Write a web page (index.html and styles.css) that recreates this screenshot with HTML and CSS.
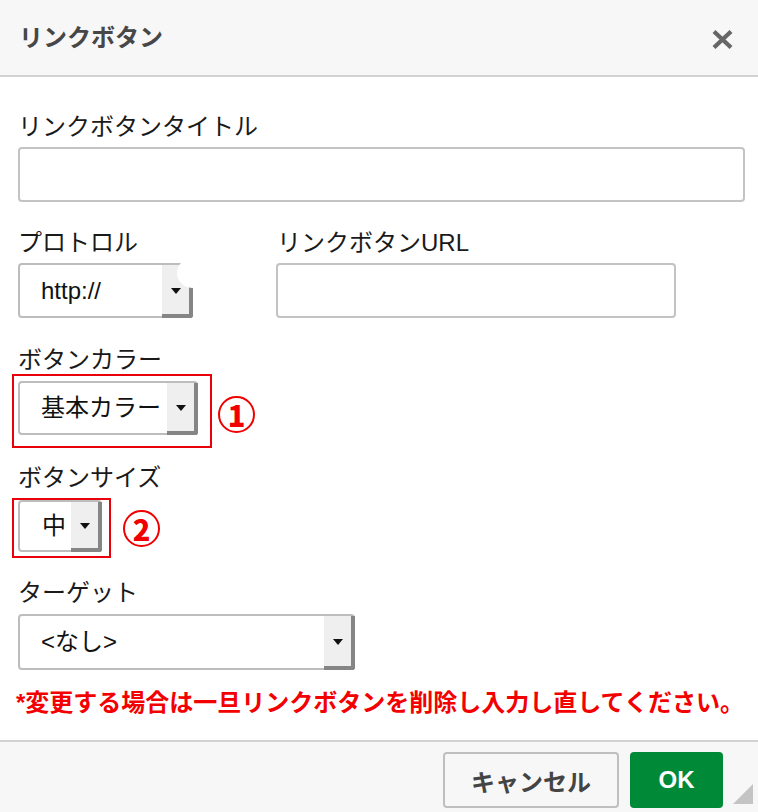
FILE: index.html
```html
<!DOCTYPE html>
<html lang="ja">
<head>
<meta charset="utf-8">
<title>リンクボタン</title>
<link rel="stylesheet" href="styles.css">
</head>
<body>
<div class="dialog">
  <div class="header">
    <div class="title">リンクボタン</div>
    <svg class="close" width="21" height="19" viewBox="0 0 21 19"><path d="M2 1.5 L19 17.5 M19 1.5 L2 17.5" stroke="#666" stroke-width="4.2" fill="none"/></svg>
  </div>
  <div class="body">
    <div class="label first">リンクボタンタイトル</div>
    <div class="input wide"></div>

    <div class="row">
      <div class="col proto">
        <div class="label">プロトロル</div>
        <div class="select w-proto">
          <span class="val">http://</span>
          <span class="arrow"><svg width="10" height="6" viewBox="0 0 10 6"><path d="M0 0 H10 L5 6 Z" fill="#111"/></svg></span>
          <span class="blob"></span>
        </div>
      </div>
      <div class="col url">
        <div class="label">リンクボタンURL</div>
        <div class="input w-url"></div>
      </div>
    </div>

    <div class="label l-color">ボタンカラー</div>
    <div class="mark-row">
      <div class="redbox rb-color">
        <div class="select w-color">
          <span class="val">基本カラー</span>
          <span class="arrow"><svg width="10" height="6" viewBox="0 0 10 6"><path d="M0 0 H10 L5 6 Z" fill="#111"/></svg></span>
        </div>
      </div>
      <span class="num n1">1</span>
    </div>

    <div class="label l-size">ボタンサイズ</div>
    <div class="mark-row">
      <div class="redbox rb-size">
        <div class="select w-size">
          <span class="val">中</span>
          <span class="arrow"><svg width="10" height="6" viewBox="0 0 10 6"><path d="M0 0 H10 L5 6 Z" fill="#111"/></svg></span>
        </div>
      </div>
      <span class="num n2">2</span>
    </div>

    <div class="label l-target">ターゲット</div>
    <div class="select w-target">
      <span class="val">&lt;なし&gt;</span>
      <span class="arrow"><svg width="10" height="6" viewBox="0 0 10 6"><path d="M0 0 H10 L5 6 Z" fill="#111"/></svg></span>
    </div>

    <div class="note">*変更する場合は一旦リンクボタンを削除し入力し直してください。</div>
  </div>
  <div class="footer">
    <div class="btn cancel">キャンセル</div>
    <div class="btn ok">OK</div>
    <svg class="resize" width="20" height="20" viewBox="0 0 20 20"><path d="M20 0 V20 H0 Z" fill="#c4c4c4"/></svg>
  </div>
</div>
</body>
</html>
```
FILE: styles.css
```css
html, body {
  margin: 0;
  padding: 0;
  background: #fff;
}
body {
  font-family: "Liberation Sans", "Noto Sans CJK JP", sans-serif;
  color: #1a1a1a;
}
.dialog {
  width: 758px;
  height: 812px;
  position: relative;
  display: flex;
  flex-direction: column;
  overflow: hidden;
}
.header {
  height: 75px;
  background: #f7f7f7;
  border-bottom: 2px solid #d2d2d2;
  display: flex;
  align-items: center;
  justify-content: space-between;
  padding: 0 25px 0 19px;
  flex: none;
}
.title {
  font-size: 24px;
  font-weight: bold;
  color: #474747;
  line-height: 30px;
  margin-top: 1px;
}
.close {
  display: block;
  margin-top: 3px;
}
.body {
  flex: 1;
  padding: 0 13px 0 18px;
}
.label {
  font-size: 24px;
  line-height: 30px;
  height: 30px;
  white-space: nowrap;
}
.label.first { margin-top: 35px; }
.input {
  box-sizing: border-box;
  height: 55px;
  border: 2px solid #c3c3c3;
  border-radius: 4px;
  background: #fff;
}
.input.wide {
  margin-top: 5px;
  width: 727px;
}
.row {
  display: flex;
  margin-top: 26px;
}
.col.proto { width: 175px; }
.col.url { margin-left: 83px; }
.col.url .label { padding-left: 1px; }
.input.w-url {
  margin-top: 5px;
  width: 400px;
}
.select {
  box-sizing: border-box;
  position: relative;
  height: 55px;
  border: 2px solid #bdbdbd;
  border-radius: 4px;
  background: #fff;
  display: flex;
  align-items: center;
  font-size: 24px;
  color: #111;
}
.select .val {
  flex: 1;
  padding-left: 21px;
  line-height: 30px;
  white-space: nowrap;
}
.select .arrow {
  box-sizing: border-box;
  align-self: stretch;
  width: 31px;
  margin: 0 -2px -2px 0;
  background: #efefef;
  border-right: 4px solid #858585;
  border-bottom: 4px solid #858585;
  border-bottom-right-radius: 3px;
  display: flex;
  align-items: center;
  justify-content: center;
  padding-top: 2px;
}
.select .arrow svg { display: block; }
.select .blob {
  position: absolute;
  left: 157px;
  top: -7px;
  width: 30px;
  height: 30px;
  border-radius: 50%;
  background: #fff;
}
.w-proto {
  margin-top: 5px;
  width: 175px;
}
.l-color { margin-top: 27px; }
.mark-row {
  display: flex;
  align-items: center;
  margin-left: -6px;
}
.redbox {
  box-sizing: border-box;
  border: 2px solid #e8000b;
}
.rb-color {
  margin-top: -1px;
  width: 200px;
  height: 74px;
  padding: 5px 0 0 4px;
}
.w-color { width: 180px; height: 54px; }
.rb-size {
  margin-top: 5px;
  width: 99px;
  height: 60px;
  padding: 0 0 0 4px;
}
.w-size { width: 84px; height: 52px; }
.w-size .val { padding-left: 22px; }
.num {
  box-sizing: border-box;
  width: 37px;
  height: 37px;
  border: 2px solid #f00000;
  border-radius: 50%;
  color: #f00000;
  font-weight: 900;
  font-size: 29px;
  line-height: 32px;
  text-align: center;
  font-family: "Noto Sans CJK JP", "Liberation Sans", sans-serif;
}
.n1 { margin-left: 6px; margin-top: 6px; }
.n2 { margin-left: 12px; margin-top: 5px; }
.l-size { margin-top: 15px; }
.l-target { margin-top: 20px; }
.w-target {
  margin-top: 6px;
  width: 337px;
  height: 56px;
}
.note {
  margin-top: 18px;
  margin-left: -2px;
  font-size: 24px;
  line-height: 30px;
  font-weight: bold;
  color: #f30000;
  white-space: nowrap;
}
.footer {
  flex: none;
  height: 72px;
  box-sizing: border-box;
  background: #f7f7f7;
  border-top: 2px solid #d2d2d2;
  display: flex;
  justify-content: flex-end;
  align-items: flex-start;
  gap: 11px;
  padding: 10px 35px 0 0;
  position: relative;
}
.btn {
  box-sizing: border-box;
  height: 56px;
  border-radius: 4px;
  font-size: 24px;
  font-weight: bold;
  display: flex;
  align-items: center;
  justify-content: center;
}
.cancel {
  width: 176px;
  border: 2px solid #bfbfbf;
  background: #f7f7f7;
  color: #444;
}
.ok {
  width: 93px;
  background: #008a37;
  color: #fff;
  border: 2px solid #008a37;
}
.resize {
  position: absolute;
  right: 5px;
  bottom: 8px;
  display: block;
}
```
